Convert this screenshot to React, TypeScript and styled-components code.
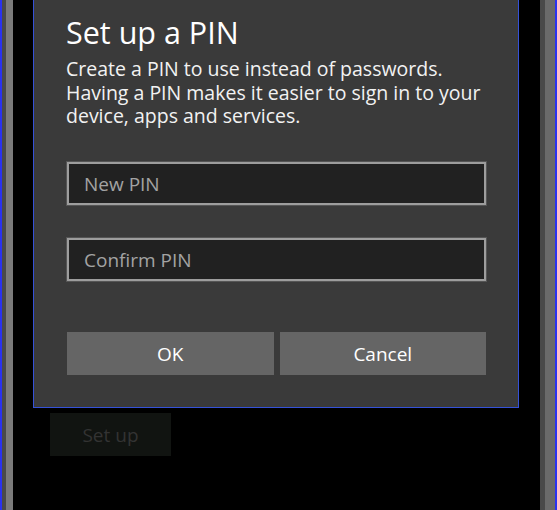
import styled, { createGlobalStyle } from 'styled-components';

const GlobalStyle = createGlobalStyle`
  html, body {
    margin: 0;
    padding: 0;
    background: #000;
  }
  body {
    font-family: 'Open Sans', 'Noto Sans', sans-serif;
  }
`;

export default function App() {
  return (
    <>
      <GlobalStyle />
      <Screen>
        <EdgeStrip side="left" />
        <Main>
          <Dialog>
            <Title>Set up a PIN</Title>
            <Description>
              Create a PIN to use instead of passwords.
              <br />
              Having a PIN makes it easier to sign in to your device, apps and
              services.
            </Description>
            <Fields>
              <PinInput type="password" placeholder="New PIN" />
              <PinInput type="password" placeholder="Confirm PIN" />
            </Fields>
            <Actions>
              <DialogButton>OK</DialogButton>
              <DialogButton>Cancel</DialogButton>
            </Actions>
          </Dialog>
          <SetupButton disabled>Set up</SetupButton>
        </Main>
        <EdgeStrip side="right" />
      </Screen>
    </>
  );
}

const Screen = styled.div`
  display: flex;
  width: 557px;
  height: 510px;
  background: #000;
  overflow: hidden;
`;

const EdgeStrip = styled.div<{ side: 'left' | 'right' }>`
  flex: none;
  width: ${(p) => (p.side === 'left' ? '13px' : '17px')};
  background: ${(p) =>
    p.side === 'left'
      ? 'linear-gradient(to right, #2a32f0 0 2px, #4a4a4a 2px 6px, #7b7b7b 6px 13px)'
      : 'linear-gradient(to right, #494949 0 5px, #6a6a6a 5px 15px, #2a32f0 15px 17px)'};
`;

const Main = styled.div`
  flex: 1;
  display: flex;
  flex-direction: column;
  padding-left: 20px;
`;

const Dialog = styled.div`
  width: 486px;
  height: 408px;
  box-sizing: border-box;
  background: #3a3a3a;
  border: 1px solid #3552d8;
  border-top: none;
  padding: 15px 32px 0 33px;
  display: flex;
  flex-direction: column;
`;

const Title = styled.h1`
  margin: 0 0 0 -1px;
  font-size: 30.5px;
  font-weight: 400;
  line-height: 34px;
  color: #fff;
`;

const Description = styled.p`
  margin: 8px 0 0 -1px;
  font-size: 19.5px;
  line-height: 23.5px;
  color: #f2f2f2;
`;

const Fields = styled.div`
  display: flex;
  flex-direction: column;
  gap: 33px;
  margin-top: 34.5px;
`;

const PinInput = styled.input`
  width: 100%;
  height: 43px;
  box-sizing: border-box;
  margin: 0;
  padding: 0 15px;
  background: #212121;
  border: 2px solid #9d9d9d;
  box-shadow: 0 0 0 1px #555;
  outline: none;
  font-family: 'Open Sans', 'Noto Sans', sans-serif;
  font-size: 19px;
  color: #fff;

  &::placeholder {
    color: #a3a3a3;
  }
`;

const Actions = styled.div`
  display: grid;
  grid-template-columns: 1fr 1fr;
  gap: 6px;
  margin-top: 51px;
`;

const DialogButton = styled.button`
  height: 43px;
  border: none;
  border-radius: 0;
  background: #656565;
  font-family: 'Open Sans', 'Noto Sans', sans-serif;
  font-size: 19px;
  color: #fff;
`;

const SetupButton = styled.button`
  align-self: flex-start;
  width: 121px;
  height: 43px;
  margin: 5px 0 0 17px;
  border: none;
  border-radius: 0;
  background: #111411;
  font-family: 'Open Sans', 'Noto Sans', sans-serif;
  font-size: 19px;
  color: #333;
`;
